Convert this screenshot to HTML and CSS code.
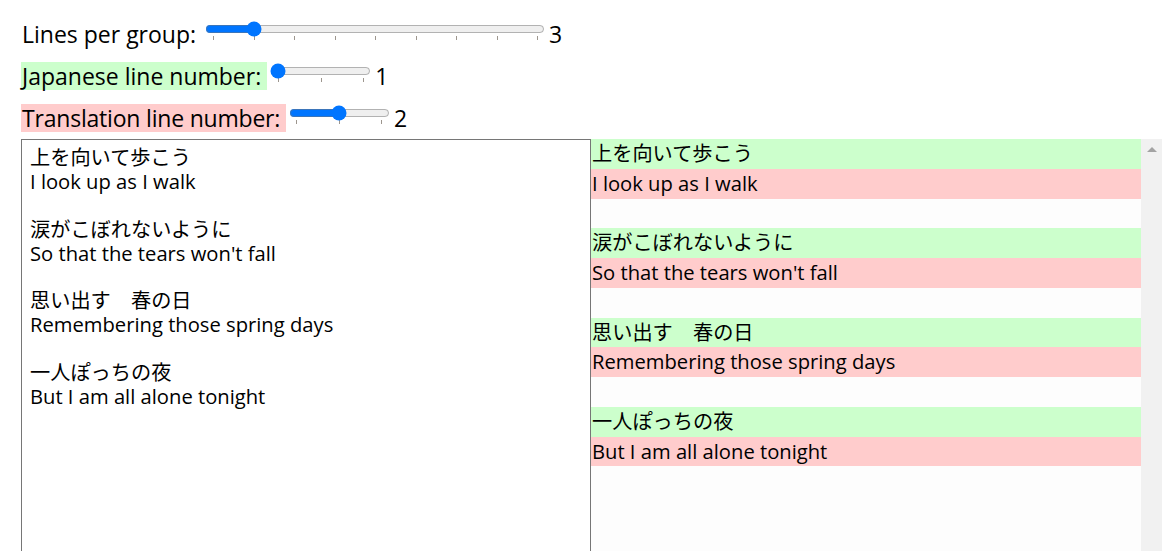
FILE: index.html
```html
<!DOCTYPE html>
<html lang="ja">
<head>
<meta charset="utf-8">
<title>Lyrics</title>
<link rel="stylesheet" href="styles.css">
</head>
<body>
<div class="page">
  <div class="controls">
    <div class="row">
      <span class="label">Lines per group: </span>
      <input type="range" class="slider slider-wide" min="2" max="10" value="3" list="ticks-group">
      <span class="val">3</span>
    </div>
    <div class="row">
      <span class="label label-ja">Japanese line number: </span>
      <input type="range" class="slider slider-narrow" min="1" max="3" value="1" list="ticks-line">
      <span class="val">1</span>
    </div>
    <div class="row">
      <span class="label label-tr">Translation line number: </span>
      <input type="range" class="slider slider-narrow" min="1" max="3" value="2" list="ticks-line">
      <span class="val">2</span>
    </div>
  </div>
  <div class="main">
    <textarea class="editor" spellcheck="false">上を向いて歩こう
I look up as I walk

涙がこぼれないように
So that the tears won't fall

思い出す　春の日
Remembering those spring days

一人ぽっちの夜
But I am all alone tonight</textarea>
    <div class="preview">
      <div class="lines">
        <div class="line line-ja">上を向いて歩こう</div>
        <div class="line line-tr">I look up as I walk</div>
        <div class="line"></div>
        <div class="line line-ja">涙がこぼれないように</div>
        <div class="line line-tr">So that the tears won't fall</div>
        <div class="line"></div>
        <div class="line line-ja">思い出す　春の日</div>
        <div class="line line-tr">Remembering those spring days</div>
        <div class="line"></div>
        <div class="line line-ja">一人ぽっちの夜</div>
        <div class="line line-tr">But I am all alone tonight</div>
      </div>
      <div class="scrollbar"><span class="arrow"></span></div>
    </div>
  </div>
</div>
<datalist id="ticks-group">
  <option value="2"></option><option value="3"></option><option value="4"></option>
  <option value="5"></option><option value="6"></option><option value="7"></option>
  <option value="8"></option><option value="9"></option><option value="10"></option>
</datalist>
<datalist id="ticks-line">
  <option value="1"></option><option value="2"></option><option value="3"></option>
</datalist>
</body>
</html>
```
FILE: styles.css
```css
html, body {
  margin: 0;
  padding: 0;
  overflow: hidden;
  background: #ffffff;
}

.page {
  padding: 20px 11px 0 21px;
  font-family: "Open Sans", "Noto Sans CJK JP", sans-serif;
  font-size: 20px;
  color: #000000;
}

.controls {
  display: flex;
  flex-direction: column;
  gap: 14px;
}

.row {
  display: flex;
  align-items: flex-start;
  height: 28px;
  font-size: 23px;
}

.label {
  line-height: 28px;
  white-space: pre;
  padding-left: 1px;
}

.label-ja {
  background: #ccffcc;
}

.label-tr {
  background: #ffcccc;
  letter-spacing: -0.2px;
}

.slider {
  margin: -2px 2px 0 3px;
}

.slider-wide {
  width: 340px;
}

.slider-narrow {
  width: 101px;
}

.val {
  line-height: 28px;
  margin-left: 2px;
}

.main {
  display: flex;
  margin-top: 7px;
  height: 440px;
}

.editor {
  box-sizing: border-box;
  width: 570px;
  height: 440px;
  margin: 0;
  border: 1px solid #767676;
  padding: 6px 8px;
  font: inherit;
  font-size: 20.2px;
  line-height: 23.9px;
  resize: none;
  outline: none;
  background: #ffffff;
  color: #000000;
}

.preview {
  display: flex;
  width: 571px;
  background: #fdfdfd;
  font-size: 20.2px;
}

.lines {
  flex: 1;
}

.line {
  height: 29.75px;
  line-height: 29.75px;
  padding-left: 1px;
  white-space: pre;
}

.line-ja {
  background: #ccffcc;
}

.line-tr {
  background: #ffcccc;
}

.scrollbar {
  width: 21px;
  background: #f1f1f1;
  display: flex;
  justify-content: center;
}

.arrow {
  margin-top: 8px;
  width: 0;
  height: 0;
  border-left: 5px solid transparent;
  border-right: 5px solid transparent;
  border-bottom: 5px solid #a3a3a3;
}
```
